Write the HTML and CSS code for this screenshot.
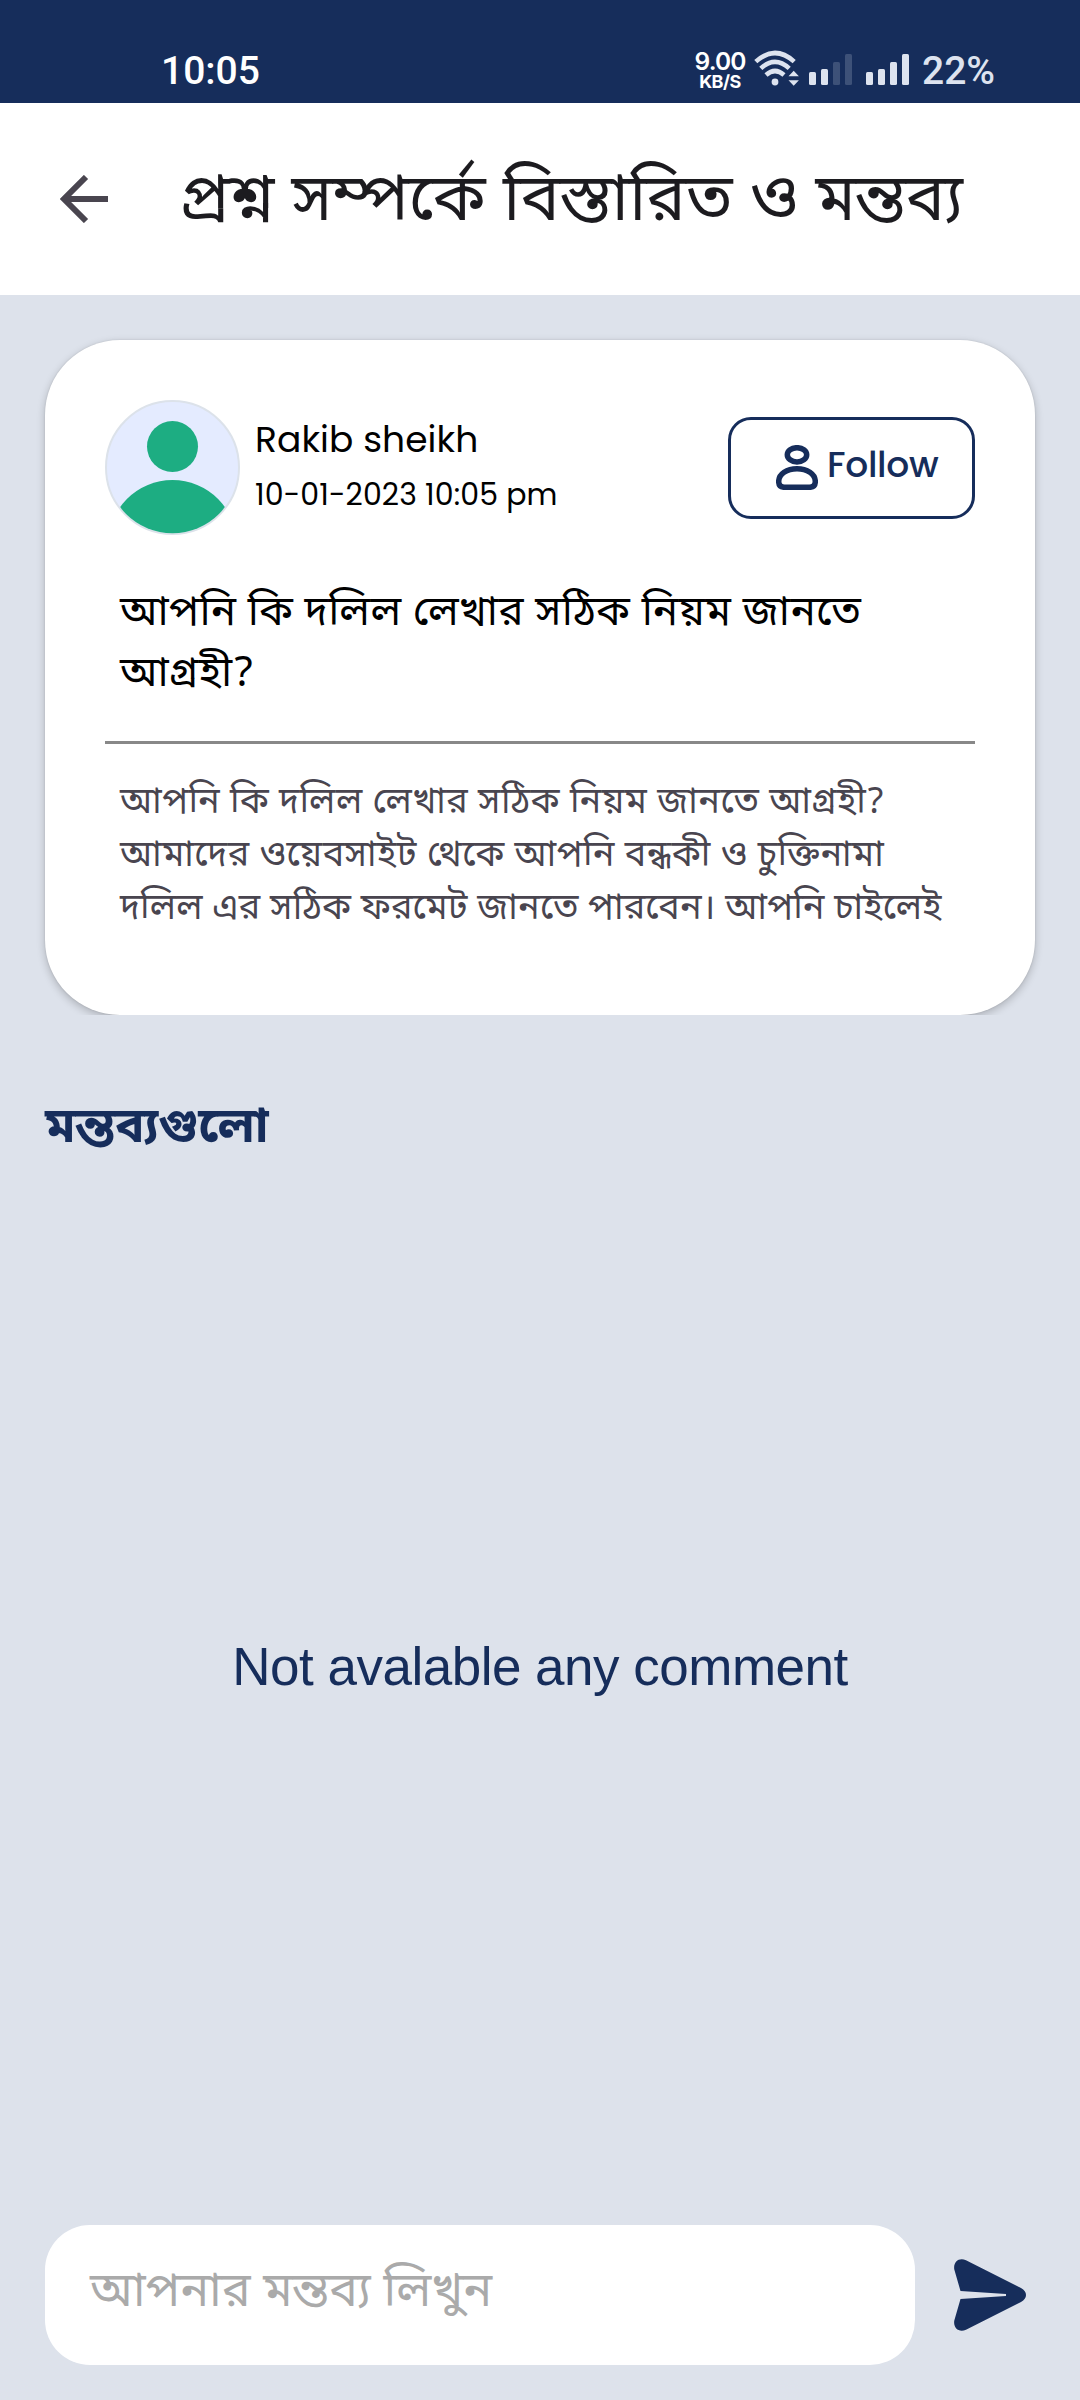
FILE: index.html
```html
<!DOCTYPE html>
<html lang="bn">
<head>
<meta charset="utf-8">
<title>প্রশ্ন সম্পর্কে বিস্তারিত ও মন্তব্য</title>
<link rel="stylesheet" href="styles.css">
</head>
<body>
<div class="statusbar">
  <span class="clock">10:05</span>
  <div class="status-right">
    <div class="speed"><span class="speed-value">9.00</span><span class="speed-unit">KB/S</span></div>
    <svg class="wifi" width="46" height="38" viewBox="0 0 46 38">
      <g fill="none" stroke="#dde3ef" stroke-width="4.6">
        <path d="M1.8 11.6Q21 -5.6 40.2 11.6"/>
        <path d="M6.8 18.4Q21 5.4 35.2 18.4"/>
        <path d="M12 25Q21 17 30 25"/>
      </g>
      <circle cx="21" cy="32" r="3.4" fill="#dde3ef"/>
      <path d="M34.5 26.3L39.7 20.8L44.9 26.3ZM34.5 30.2L39.7 35.8L44.9 30.2Z" fill="#dde3ef"/>
    </svg>
    <svg class="signal" width="43" height="31" viewBox="0 0 43 31" fill="#dde3ef">
      <rect x="0" y="18" width="7" height="13" rx="1.5"/>
      <rect x="12" y="15" width="7" height="16" rx="1.5"/>
      <rect x="24" y="8" width="7" height="23" rx="1.5" opacity=".2"/>
      <rect x="36" y="0" width="7" height="31" rx="1.5" opacity=".2"/>
    </svg>
    <svg class="signal signal-full" width="43" height="31" viewBox="0 0 43 31" fill="#dde3ef">
      <rect x="0" y="18" width="7" height="13" rx="1.5"/>
      <rect x="12" y="15" width="7" height="16" rx="1.5"/>
      <rect x="24" y="8" width="7" height="23" rx="1.5"/>
      <rect x="36" y="0" width="7" height="31" rx="1.5"/>
    </svg>
    <span class="battery">22%</span>
  </div>
</div>
<header class="appbar">
  <svg class="back" width="48" height="48" viewBox="0 0 48 48"><path d="M48 24H4M26 2L4 24L26 46" fill="none" stroke="#49454f" stroke-width="6"/></svg>
  <h1 class="title">প্রশ্ন সম্পর্কে বিস্তারিত ও মন্তব্য</h1>
</header>
<main class="content">
  <div class="card-wrap">
    <article class="card">
      <div class="author">
        <svg class="avatar" width="135" height="135" viewBox="0 0 135 135">
          <clipPath id="disc"><circle cx="67.5" cy="67.5" r="65.7"/></clipPath>
          <circle cx="67.5" cy="67.5" r="66.5" fill="#e4ebff" stroke="#dce2ea" stroke-width="2"/>
          <g fill="#1dad82"><circle cx="67.5" cy="46.5" r="25.5"/><circle cx="67.5" cy="144.5" r="64.5" clip-path="url(#disc)"/></g>
        </svg>
        <div class="meta"><span class="name">Rakib sheikh</span><span class="date">10-01-2023 10:05 pm</span></div>
        <button class="follow">
          <svg width="42" height="45" viewBox="0 0 42 45"><g fill="none" stroke="#162d5b" stroke-width="5.5"><ellipse cx="21" cy="9.8" rx="9.7" ry="7.1"/><path d="M8.5 42.3H33.5Q39.3 42.3 39.3 36.5C39.3 29 31 23.7 21 23.7S2.7 29 2.7 36.5Q2.7 42.3 8.5 42.3Z"/></g></svg>
          <span>Follow</span>
        </button>
      </div>
      <h2 class="question">আপনি কি দলিল লেখার সঠিক নিয়ম জানতে<br>আগ্রহী?</h2>
      <hr class="rule">
      <p class="details">আপনি কি দলিল লেখার সঠিক নিয়ম জানতে আগ্রহী?<br>আমাদের ওয়েবসাইট থেকে আপনি বন্ধকী ও চুক্তিনামা<br><span class="last-line">দলিল এর সঠিক ফরমেট জানতে পারবেন। আপনি চাইলেই</span></p>
    </article>
  </div>
  <h3 class="comments-title">মন্তব্যগুলো</h3>
  <p class="empty"><span>Not avalable any comment</span></p>
  <div class="composer">
    <div class="input">আপনার মন্তব্য লিখুন</div>
    <svg class="send" width="72" height="72" viewBox="0 0 72 72"><path d="M12 1.3L67 29Q72 32 72 36T67 43L12 70.7C5 74 -1 69 .3 61.500L6.500 40L52 37V35L6.500 32L.3 10.500C-1 3 5 -2 12 1.300Z" fill="#162d5b"/></svg>
  </div>
</main>
</body>
</html>
```
FILE: styles.css
```css
* { box-sizing: border-box; margin: 0; padding: 0; }
body {
  width: 1080px; height: 2400px; display: flex; flex-direction: column; overflow: hidden;
  background: #dde2eb; font-family: "Noto Sans Bengali", "Noto Sans", sans-serif; font-weight: 400;
}
svg { display: block; flex: none; }
.statusbar {
  height: 103px; padding: 30px 86px 0 161px; background: #162d5b; color: #fff;
  display: flex; justify-content: space-between; font-family: Roboto, sans-serif; white-space: nowrap;
}
.clock { font-size: 39px; font-weight: 500; line-height: 82px; height: 73px; }
.status-right { display: flex; }
.speed { width: 52px; display: flex; flex-direction: column; align-items: center; padding-top: 20px; font-family: Inter, sans-serif; }
.speed-value { font-size: 24.5px; font-weight: 600; line-height: 23px; letter-spacing: -0.9px; }
.speed-unit { font-size: 18px; font-weight: 700; line-height: 18px; letter-spacing: -0.5px; }
.wifi { margin: 20px 0 0 8px; }
.signal { margin: 24px 0 0 9px; }
.signal-full { margin-left: 14px; }
.battery { margin-left: 13px; width: 72px; font-size: 39px; font-weight: 500; line-height: 82px; color: #dde3ef; }
.appbar { height: 192px; background: #fff; display: flex; align-items: center; padding-left: 60px; }
.title { margin-left: 71px; padding-top: 7px; font-size: 66px; font-weight: 400; line-height: 90px; color: #1c1b1f; white-space: nowrap; }
.content { flex: 1; display: flex; flex-direction: column; }
.card-wrap { height: 720px; padding: 45px 45px 0; overflow: hidden; }
.card { height: 675px; padding: 60px; border-radius: 75px; background: #fff; box-shadow: 0 3px 8px rgba(0,0,0,.22), 0 0 2px rgba(0,0,0,.12); }
.author { height: 135px; display: flex; font-family: Poppins, sans-serif; color: #000; }
.meta { margin-left: 15px; flex: 1; display: flex; flex-direction: column; padding-top: 13px; }
.name { font-size: 36px; line-height: 54px; letter-spacing: 0.1px; }
.date { font-size: 30px; line-height: 56px; letter-spacing: 0.1px; }
.follow {
  width: 247px; height: 102px; margin-top: 17px; padding: 0 0 0 45px; border: 3px solid #162d5b; border-radius: 23px;
  background: none; display: flex; align-items: center; font: 500 36px/54px Poppins, sans-serif; color: #162d5b; letter-spacing: -0.3px;
}
.follow svg { margin-top: -1px; }
.follow span { margin: -7px 0 0 9px; }
.question { margin: 49px 15px 0; font-size: 42px; font-weight: 400; line-height: 61px; letter-spacing: 0.4px; color: #000; white-space: nowrap; }
.rule { margin-top: 35px; height: 3px; border: 0; background: #888; }
.details { margin: 34px 15px 0; font-size: 36px; line-height: 53px; letter-spacing: 0.5px; color: #49454f; white-space: nowrap; }
.last-line { letter-spacing: 0.2px; }
.comments-title { margin: 83px 45px 0; height: 61px; font-size: 49px; line-height: 64px; font-weight: 700; color: #162d5b; }
.empty { flex: 1; display: flex; align-items: center; justify-content: center; padding-bottom: 51px; font: 53px/60px "Liberation Sans", sans-serif; letter-spacing: -0.5px; color: #162d5b; }
.composer { height: 175px; padding: 0 54px 35px 45px; display: flex; align-items: center; justify-content: space-between; }
.input { width: 870px; height: 140px; padding-left: 45px; border-radius: 45px; background: #fff; font-size: 48px; line-height: 139px; letter-spacing: 0.1px; color: #aaa; }
```
